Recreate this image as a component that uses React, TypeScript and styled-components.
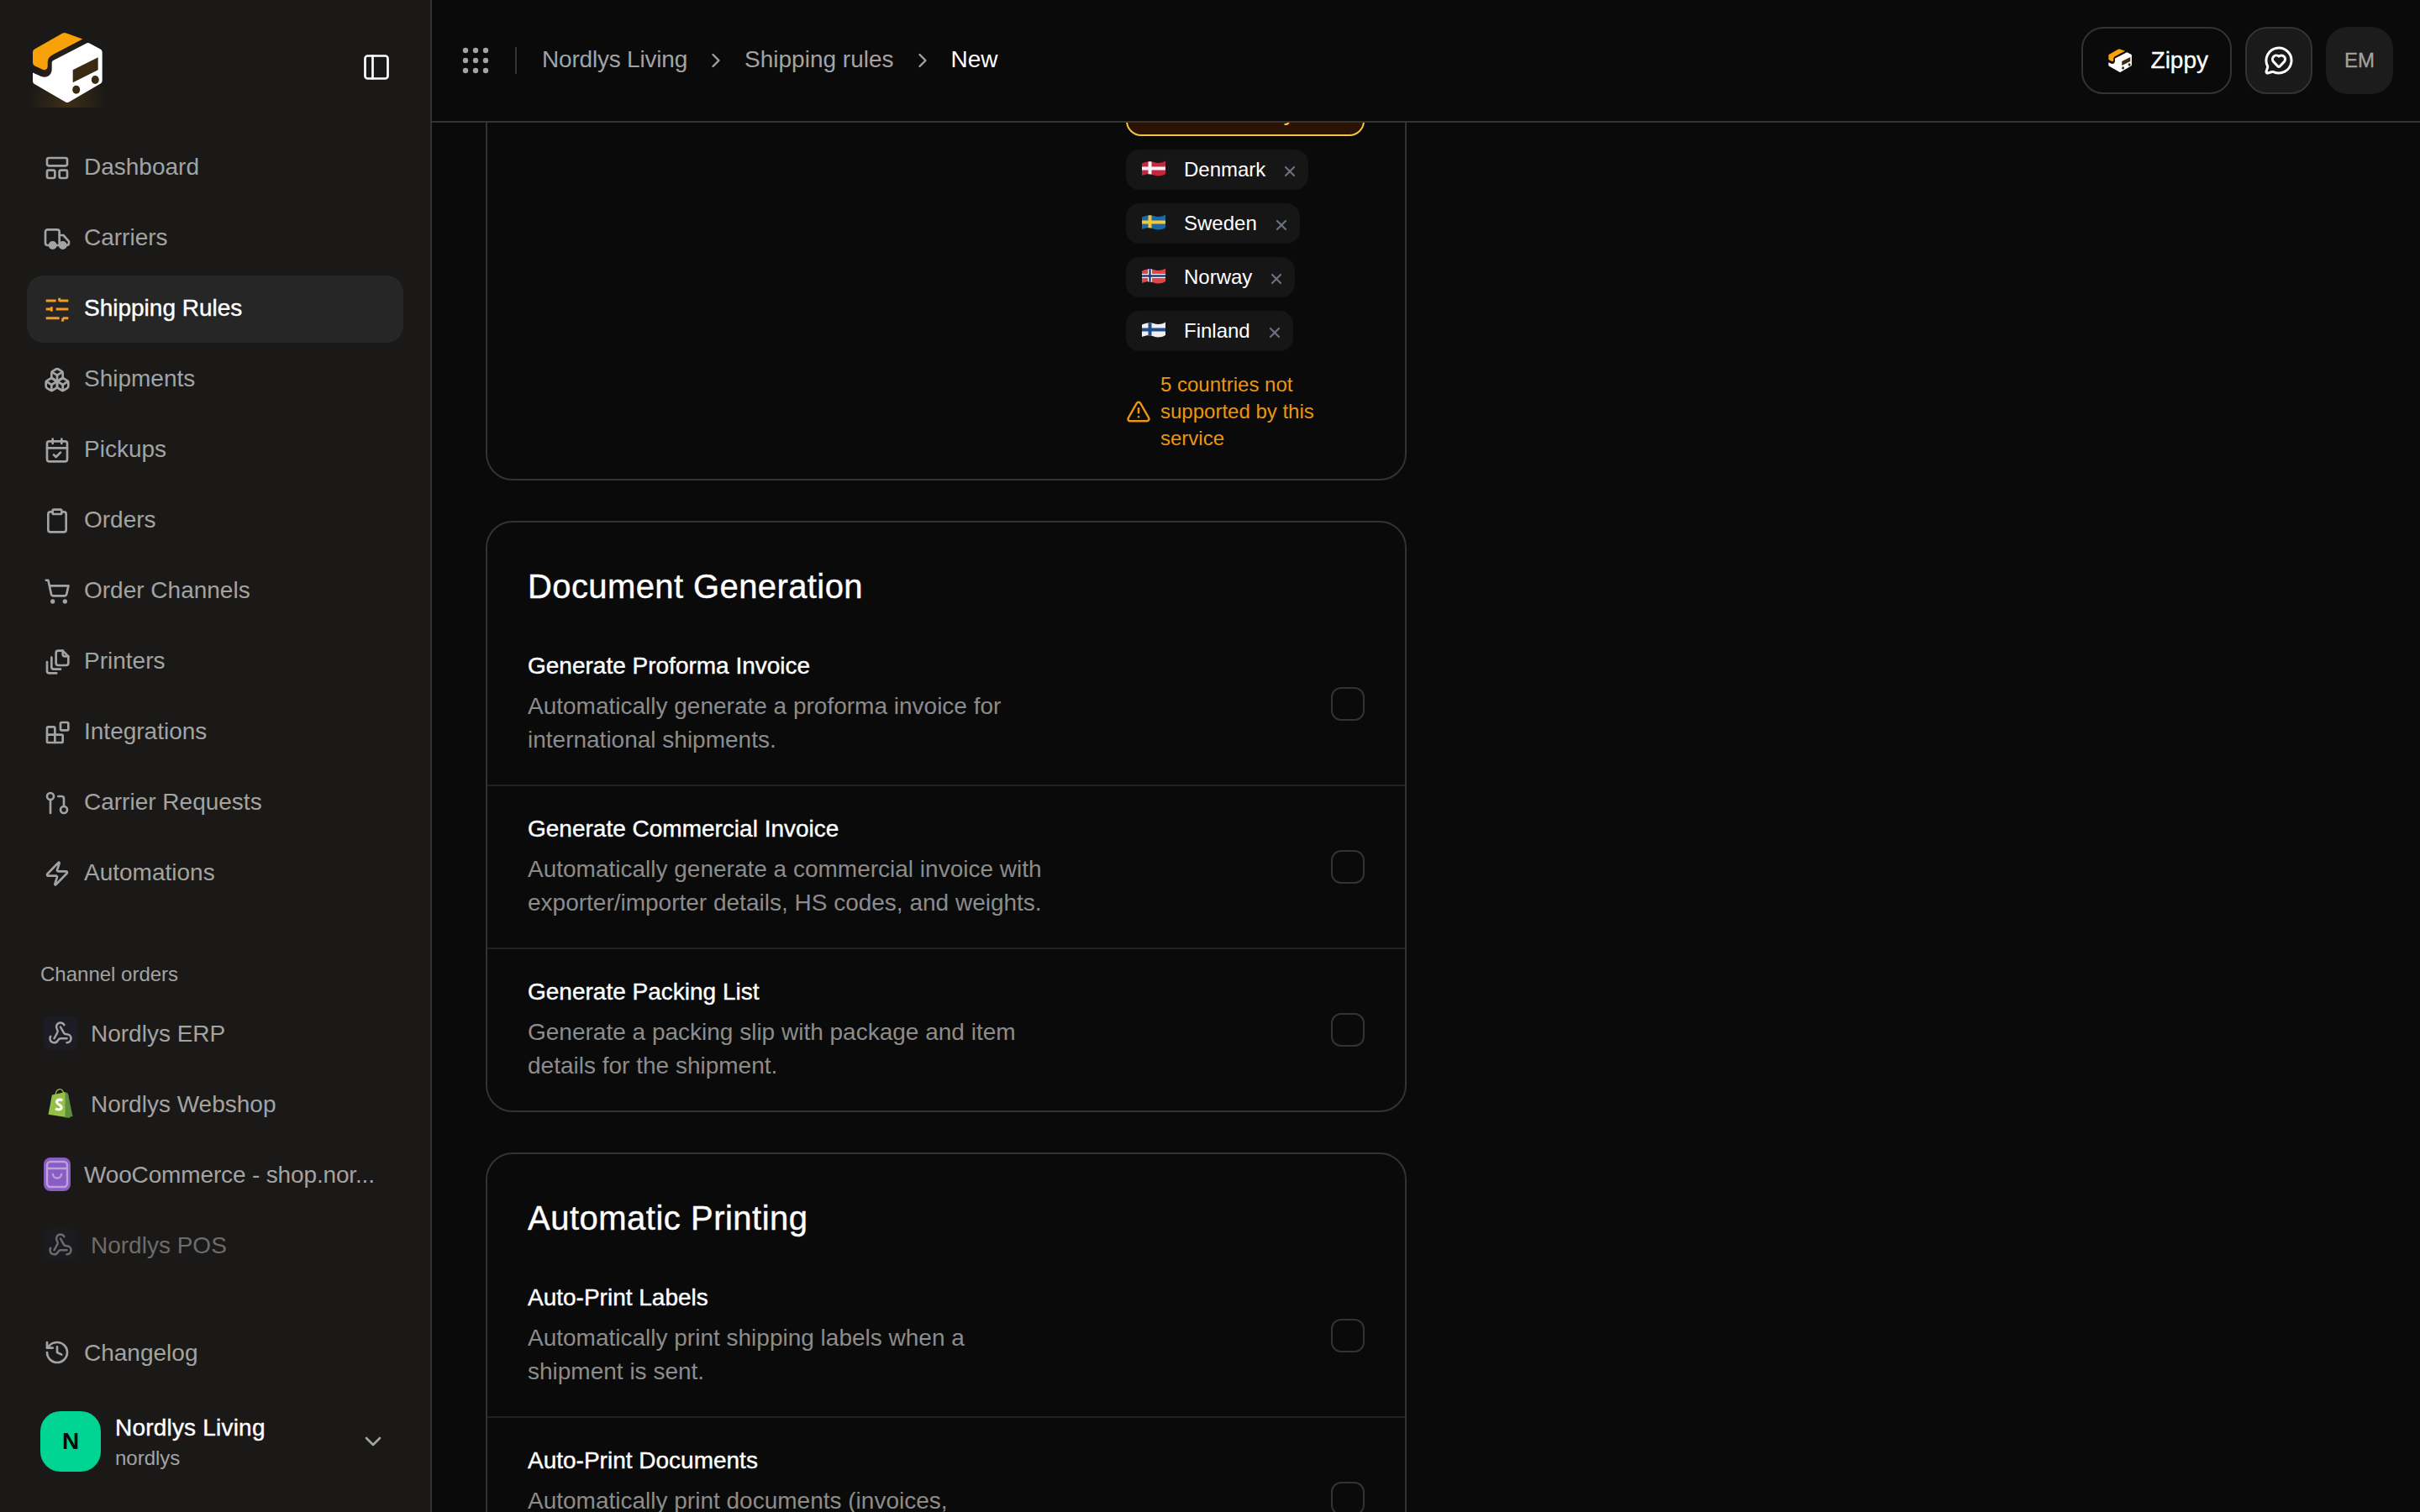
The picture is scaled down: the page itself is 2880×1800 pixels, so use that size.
import React from 'react';
import styled, { createGlobalStyle } from 'styled-components';
import {
  Boxes,
  CalendarCheck,
  ChevronDown,
  ChevronRight,
  Clipboard,
  GitPullRequest,
  History,
  MessageCircleHeart,
  PanelLeft,
  ShoppingCart,
  TriangleAlert,
  Webhook,
  X,
  Zap,
} from 'lucide-react';

const GlobalStyle = createGlobalStyle`
  html, body {
    margin: 0;
    padding: 0;
    background: #0a0a0a;
    font-family: "Liberation Sans", Arial, sans-serif;
  }
`;

const Shell = styled.div`
  display: flex;
  height: 100vh;
  overflow: hidden;
  background: #0a0a0a;
`;

const Sidebar = styled.aside`
  display: flex;
  flex-direction: column;
  flex: none;
  box-sizing: border-box;
  width: 514px;
  min-width: 0;
  height: 100%;
  padding: 32px 32px 48px;
  background: #1a1918;
  border-right: 2px solid #333;
`;

const Brand = styled.div`
  display: flex;
  align-items: center;
  justify-content: space-between;
  height: 96px;
  padding-right: 14px;
  margin-bottom: 32px;
`;

const LogoBox = styled.div`
  width: 96px;
  height: 96px;
  background: radial-gradient(ellipse at 50% 100%, rgba(245, 158, 11, 0.16), transparent 68%);
`;

const ToggleButton = styled.div`
  display: flex;
  color: #fff;
`;

const NavList = styled.nav`
  display: flex;
  flex-direction: column;
  gap: 4px;
`;

const NavItem = styled.div<{ $active?: boolean; $dim?: boolean }>`
  display: flex;
  align-items: center;
  flex: 0 0 80px;
  gap: 16px;
  box-sizing: border-box;
  height: 80px;
  padding: 0 32px 0 20px;
  border-radius: 20px;
  font-size: 28px;
  line-height: 40px;
  color: ${(p) => (p.$active ? '#fff' : '#a3a3a3')};
  background: ${(p) => (p.$active ? '#262626' : 'transparent')};
  opacity: ${(p) => (p.$dim ? 0.6 : 1)};
  -webkit-text-stroke: ${(p) => (p.$active ? '0.4px' : '0')};

  & > svg {
    flex: none;
    color: ${(p) => (p.$active ? '#f59a1c' : '#a3a3a3')};
  }
`;

const NavLabel = styled.span`
  min-width: 0;
  overflow: hidden;
  white-space: nowrap;
  text-overflow: ellipsis;
`;

const MainNavLabel = styled(NavLabel)`
  padding-bottom: 2px;
`;

const ChannelLabel = styled(NavLabel)`
  padding-top: 2px;
`;

const TruncatedLabel = styled(ChannelLabel)`
  text-overflow: clip;
  letter-spacing: -0.15px;
`;

const SectionLabel = styled.div`
  margin: 64px 0 14px 16px;
  font-size: 24px;
  line-height: 32px;
  color: #a3a3a3;
`;

const ChannelIcon = styled.div`
  display: flex;
  align-items: center;
  justify-content: center;
  flex: none;
  width: 40px;
  height: 40px;
  border-radius: 8px;
`;

const WebhookIcon = styled(ChannelIcon)`
  background: #1c1c24;
  color: #a3a3a3;
`;

const WooIcon = styled(ChannelIcon)`
  width: 32px;
  background: #8b5cc5;
`;

const Spacer = styled.div`
  flex: 1;
`;

const Account = styled.div`
  display: flex;
  align-items: center;
  gap: 17px;
  height: 72px;
  margin: 30px 0 0 16px;
  padding-right: 20px;
`;

const Avatar = styled.div`
  display: flex;
  align-items: center;
  justify-content: center;
  flex: none;
  width: 72px;
  height: 72px;
  border-radius: 24px;
  background: #00d492;
  color: #0a0a0a;
  font-size: 28px;
  font-weight: 700;
`;

const AccountText = styled.div`
  flex: 1;
  display: flex;
  flex-direction: column;
`;

const AccountName = styled.div`
  font-size: 28px;
  line-height: 40px;
  letter-spacing: 0.2px;
  color: #fff;
  -webkit-text-stroke: 0.4px;
`;

const AccountSlug = styled.div`
  font-size: 24px;
  line-height: 32px;
  color: #a3a3a3;
`;

const Main = styled.main`
  flex: 1;
  display: flex;
  flex-direction: column;
  min-width: 0;
  height: 100%;
`;

const Header = styled.header`
  position: relative;
  z-index: 1;
  display: flex;
  align-items: center;
  flex: 0 0 146px;
  box-sizing: border-box;
  padding: 0 32px 0 36px;
  background: #0a0a0a;
  border-bottom: 2px solid #333;
`;

const Divider = styled.div`
  width: 2px;
  height: 32px;
  margin: 0 30px 0 31px;
  background: #333;
`;

const Crumbs = styled.div`
  display: flex;
  align-items: center;
  gap: 20px;
  font-size: 28px;
  line-height: 40px;
  color: #a3a3a3;
`;

const Crumb = styled.span<{ $current?: boolean; $tracking?: number }>`
  padding-bottom: 2px;
  color: ${(p) => (p.$current ? '#fff' : 'inherit')};
  letter-spacing: ${(p) => p.$tracking ?? 0}px;
`;

const HeaderActions = styled.div`
  display: flex;
  align-items: center;
  gap: 16px;
  margin-left: auto;
`;

const ZippyButton = styled.div`
  display: flex;
  align-items: center;
  gap: 21px;
  box-sizing: border-box;
  height: 80px;
  padding: 0 26px 0 28px;
  border: 2px solid #333;
  border-radius: 26px;
  color: #fff;
  font-size: 28px;
  -webkit-text-stroke: 0.3px;
`;

const IconButton = styled.div`
  display: flex;
  align-items: center;
  justify-content: center;
  box-sizing: border-box;
  width: 80px;
  height: 80px;
  border: 2px solid #333;
  border-radius: 26px;
  background: #1a1a1a;
  color: #fff;
`;

const UserButton = styled(IconButton)`
  border: 0;
  background: #1c1c1c;
  color: #a3a3a3;
  font-size: 24px;
  -webkit-text-stroke: 0.3px;
`;

const ScrollArea = styled.div`
  flex: 1;
  min-height: 0;
  overflow: hidden;
`;

const Form = styled.div`
  display: flex;
  flex-direction: column;
  gap: 48px;
  width: 1096px;
  margin: -74px 0 0 64px;
`;

const Card = styled.section`
  border: 2px solid #333;
  border-radius: 32px;
`;

const CountryField = styled.div`
  display: flex;
  flex-direction: column;
  align-items: flex-start;
  gap: 16px;
  width: 284px;
  margin-left: auto;
  padding: 32px 48px 32px 0;
`;

const CountryTrigger = styled.div`
  box-sizing: border-box;
  align-self: stretch;
  height: 56px;
  padding-left: 22px;
  border: 2px solid #f5c542;
  border-radius: 18px;
  background: #2a1204;
  color: #f5c542;
  font-size: 28px;
  line-height: 52px;
`;

const Chip = styled.div`
  display: flex;
  align-items: center;
  gap: 22px;
  box-sizing: border-box;
  height: 48px;
  padding: 0 12px 0 19px;
  border-radius: 16px;
  background: #161616;
  color: #fff;
  font-size: 24px;

  & > svg:first-child {
    margin-top: -4px;
  }

  & > svg:last-child {
    margin: 4px 0 0 -3px;
    color: #6b7280;
  }
`;

const Warning = styled.div`
  display: flex;
  align-items: center;
  gap: 11px;
  margin-top: 8px;
  color: #ec960f;
  font-size: 24px;
  line-height: 32px;

  & > svg {
    flex: none;
  }
`;

const CardTitle = styled.h2<{ $tracking?: number }>`
  margin: 0 0 16px;
  padding: 48px 48px 0;
  font-size: 40px;
  font-weight: 400;
  line-height: 56px;
  letter-spacing: ${(p) => p.$tracking ?? 0}px;
  color: #fff;
  -webkit-text-stroke: 0.4px;
`;

const Row = styled.div`
  display: flex;
  align-items: center;
  justify-content: space-between;
  padding: 32px 48px;
  border-bottom: 2px solid #222;

  &:last-child {
    border-bottom: 0;
  }
`;

const RowText = styled.div`
  display: flex;
  flex-direction: column;
  gap: 8px;
  max-width: 640px;
  margin: -1px 0 1px;
`;

const RowTitle = styled.div`
  font-size: 28px;
  line-height: 40px;
  color: #fff;
  -webkit-text-stroke: 0.4px;
`;

const RowDescription = styled.div`
  font-size: 28px;
  line-height: 40px;
  color: #8c8c8c;
`;

const Checkbox = styled.div`
  flex: none;
  box-sizing: border-box;
  width: 40px;
  height: 40px;
  border: 2px solid #333;
  border-radius: 12px;
`;

const stroke = {
  fill: 'none',
  stroke: 'currentColor',
  strokeWidth: 2,
  strokeLinecap: 'round' as const,
  strokeLinejoin: 'round' as const,
};

const DashboardIcon = () => (
  <svg width="32" height="32" viewBox="0 0 24 24" {...stroke}>
    <rect x="3" y="3" width="18" height="7" rx="1.5" />
    <rect x="3" y="14" width="7" height="7" rx="1.5" />
    <rect x="14" y="14" width="7" height="7" rx="1.5" />
  </svg>
);

const TruckIcon = () => (
  <svg width="32" height="32" viewBox="0 0 24 24" {...stroke}>
    <path d="M5 18H3.500A2 2 0 0 1 1.500 16V6a2 2 0 0 1 2-2H12a2 2 0 0 1 2 2v12H11" />
    <path d="M14 9h3.500L22.500 14.500V16a2 2 0 0 1-2 2H20" />
    <circle cx="8" cy="18" r="2.800" fill="currentColor" />
    <circle cx="17" cy="18" r="2.800" fill="currentColor" />
  </svg>
);

const SlidersIcon = () => (
  <svg width="32" height="32" viewBox="0 0 24 24" {...stroke} strokeWidth={2.200} strokeLinecap="butt">
    <path d="M2 4.500h9M14 4.500h8M14 2v3" />
    <path d="M2 12h5M7 10v4M11 12h11" />
    <path d="M2 20h12M17 20h5M17 20v3" />
  </svg>
);

const PrintersIcon = () => (
  <svg width="32" height="32" viewBox="0 0 24 24" {...stroke}>
    <path d="M11 4a2 2 0 0 1 2-2h4l5 5v6a2 2 0 0 1-2 2h-7a2 2 0 0 1-2-2z" />
    <path d="M17 2v3a2 2 0 0 0 2 2h3" />
    <path d="M7 8v8.500a2 2 0 0 0 2 2h6" />
    <path d="M3 12v8a2 2 0 0 0 2 2h6.500" />
  </svg>
);

const IntegrationsIcon = () => (
  <svg width="32" height="32" viewBox="0 0 24 24" {...stroke}>
    <rect x="15" y="3" width="7" height="7" rx="1" />
    <path d="M3 8a1 1 0 0 1 1-1h5a1 1 0 0 1 1 1v6h6a1 1 0 0 1 1 1v5a1 1 0 0 1-1 1H4a1 1 0 0 1-1-1z" />
    <path d="M3 14h7v7" />
  </svg>
);

const BoxLogo = ({ size }: { size: number }) => (
  <svg width={size} height={size} viewBox="0 0 96 96">
    <path
      d="M71 19.500a4 4 0 0 1 3.500 0l13 7a4 4 0 0 1 2.200 3.500V64a4 4 0 0 1-2 3.500L50 89.500a4 4 0 0 1-4 0L9 68a4 4 0 0 1-2-3.500V54.500l10 4.500c7 2.500 12.700-1.500 12.700-9V42.500a3 3 0 0 1 1.600-2.600z"
      fill="#fff"
    />
    <path
      d="M42.500 7.500a5 5 0 0 1 4.500 0l19.300 7L31 33c-4 2-6.300 5-6.300 9v5c0 3.500-3 5-6 3.700L9.500 46.500A4.500 4.500 0 0 1 7 42.500V30a4 4 0 0 1 2.200-3.500z"
      fill="#f9a109"
    />
    <path d="M54.700 51.300l30-15v15l-30 15z" fill="#392a12" />
    <ellipse cx="58.700" cy="74.700" rx="4.500" ry="5" fill="#392a12" />
    <ellipse cx="81.300" cy="63" rx="4.500" ry="5" fill="#392a12" />
  </svg>
);

const GridDots = () => (
  <svg width="32" height="32" viewBox="0 0 32 32" fill="#a3a3a3">
    {[4, 16, 28].map((cy) =>
      [4, 16, 28].map((cx) => <circle key={`${cx}-${cy}`} cx={cx} cy={cy} r="3.200" />),
    )}
  </svg>
);

const ShopifyIcon = () => (
  <svg width="36" height="38" viewBox="0 0 32 34">
    <path d="M3 28.500L7 7.500 21 4.500 26 32z" fill="#95bf47" />
    <path d="M21 4.500l3 1.500 5 24.500-8 1.500z" fill="#5e8e3e" />
    <path d="M10.500 8C11 4 13 1.500 15.500 1.500S19 3.500 19.500 7" fill="none" stroke="#95bf47" strokeWidth="1.200" />
    <path d="M18 13.500c-2.500-1.500-6-.8-6 1.700 0 2.700 5 2.700 5 5.600 0 2.600-3.600 3-6.300 1.300" fill="none" stroke="#fff" strokeWidth="2.800" />
  </svg>
);

const WooBag = () => (
  <svg width="32" height="40" viewBox="0 0 32 40" fill="none" stroke="#b8a5d6" strokeWidth="2.400" strokeLinecap="round">
    <rect x="4" y="5" width="24" height="30" rx="4" />
    <path d="M5 13h22" />
    <path d="M11 20c0 6 10 6 10 0" />
  </svg>
);

const flagOutline = 'M0 4.500C6 2 10 1.500 14 3s9 1.500 14-1.500V17c-5 3-10 3-14 1.500S6 16.500 0 19z';

const Flag = ({ id, base, cross, inner }: { id: string; base: string; cross: string; inner?: string }) => (
  <svg width="28" height="21" viewBox="0 0 28 21">
    <clipPath id={id}>
      <path d={flagOutline} />
    </clipPath>
    <g clipPath={`url(#${id})`}>
      <rect width="28" height="21" fill={base} />
      <path d="M9.500 0v21M0 10.500h28" stroke={cross} strokeWidth={inner ? 5 : 4} />
      {inner && <path d="M9.500 0v21M0 10.500h28" stroke={inner} strokeWidth="2.400" />}
    </g>
  </svg>
);

const navItems = [
  { label: 'Dashboard', icon: <DashboardIcon /> },
  { label: 'Carriers', icon: <TruckIcon /> },
  { label: 'Shipping Rules', icon: <SlidersIcon />, active: true },
  { label: 'Shipments', icon: <Boxes size={32} /> },
  { label: 'Pickups', icon: <CalendarCheck size={32} /> },
  { label: 'Orders', icon: <Clipboard size={32} /> },
  { label: 'Order Channels', icon: <ShoppingCart size={32} /> },
  { label: 'Printers', icon: <PrintersIcon /> },
  { label: 'Integrations', icon: <IntegrationsIcon /> },
  { label: 'Carrier Requests', icon: <GitPullRequest size={32} /> },
  { label: 'Automations', icon: <Zap size={32} /> },
];

const countries = [
  { name: 'Denmark', id: 'dk', base: '#c8253f', cross: '#f4f4f4' },
  { name: 'Sweden', id: 'se', base: '#1a6aa8', cross: '#f5c731' },
  { name: 'Norway', id: 'no', base: '#e0454a', cross: '#f4f4f4', inner: '#27367d' },
  { name: 'Finland', id: 'fi', base: '#f0f0f0', cross: '#1f4a8c' },
];

const documentRows = [
  {
    title: 'Generate Proforma Invoice',
    text: 'Automatically generate a proforma invoice for international shipments.',
  },
  {
    title: 'Generate Commercial Invoice',
    text: 'Automatically generate a commercial invoice with exporter/importer details, HS codes, and weights.',
  },
  {
    title: 'Generate Packing List',
    text: 'Generate a packing slip with package and item details for the shipment.',
  },
];

const printingRows = [
  {
    title: 'Auto-Print Labels',
    text: 'Automatically print shipping labels when a shipment is sent.',
  },
  {
    title: 'Auto-Print Documents',
    text: 'Automatically print documents (invoices, commercial forms) when a shipment is sent.',
  },
];

const SettingRows = ({ rows }: { rows: { title: string; text: string }[] }) => (
  <>
    {rows.map((row) => (
      <Row key={row.title}>
        <RowText>
          <RowTitle>{row.title}</RowTitle>
          <RowDescription>{row.text}</RowDescription>
        </RowText>
        <Checkbox />
      </Row>
    ))}
  </>
);

const App: React.FC = () => (
  <Shell>
    <GlobalStyle />
    <Sidebar>
      <Brand>
        <LogoBox>
          <BoxLogo size={96} />
        </LogoBox>
        <ToggleButton>
          <PanelLeft size={36} strokeWidth={1.8} />
        </ToggleButton>
      </Brand>
      <NavList>
        {navItems.map((item) => (
          <NavItem key={item.label} $active={item.active}>
            {item.icon}
            <MainNavLabel>{item.label}</MainNavLabel>
          </NavItem>
        ))}
      </NavList>
      <SectionLabel>Channel orders</SectionLabel>
      <NavList>
        <NavItem>
          <WebhookIcon>
            <Webhook size={30} />
          </WebhookIcon>
          <ChannelLabel>Nordlys ERP</ChannelLabel>
        </NavItem>
        <NavItem>
          <ChannelIcon>
            <ShopifyIcon />
          </ChannelIcon>
          <ChannelLabel>Nordlys Webshop</ChannelLabel>
        </NavItem>
        <NavItem>
          <WooIcon>
            <WooBag />
          </WooIcon>
          <TruncatedLabel>WooCommerce - shop.nor...</TruncatedLabel>
        </NavItem>
        <NavItem $dim>
          <WebhookIcon>
            <Webhook size={30} />
          </WebhookIcon>
          <ChannelLabel>Nordlys POS</ChannelLabel>
        </NavItem>
      </NavList>
      <Spacer />
      <NavItem>
        <History size={32} />
        <ChannelLabel>Changelog</ChannelLabel>
      </NavItem>
      <Account>
        <Avatar>N</Avatar>
        <AccountText>
          <AccountName>Nordlys Living</AccountName>
          <AccountSlug>nordlys</AccountSlug>
        </AccountText>
        <ChevronDown size={32} color="#a3a3a3" />
      </Account>
    </Sidebar>
    <Main>
      <Header>
        <GridDots />
        <Divider />
        <Crumbs>
          <Crumb $tracking={-0.2}>Nordlys Living</Crumb>
          <ChevronRight size={28} />
          <Crumb>Shipping rules</Crumb>
          <ChevronRight size={28} />
          <Crumb $current>New</Crumb>
        </Crumbs>
        <HeaderActions>
          <ZippyButton>
            <BoxLogo size={32} />
            Zippy
          </ZippyButton>
          <IconButton>
            <MessageCircleHeart size={36} />
          </IconButton>
          <UserButton>EM</UserButton>
        </HeaderActions>
      </Header>
      <ScrollArea>
        <Form>
          <Card>
            <CountryField>
              <CountryTrigger>Select country</CountryTrigger>
              {countries.map((country) => (
                <Chip key={country.id}>
                  <Flag id={country.id} base={country.base} cross={country.cross} inner={country.inner} />
                  {country.name}
                  <X size={20} strokeWidth={2.6} />
                </Chip>
              ))}
              <Warning>
                <TriangleAlert size={30} />
                <span>5 countries not supported by this service</span>
              </Warning>
            </CountryField>
          </Card>
          <Card>
            <CardTitle $tracking={0.4}>Document Generation</CardTitle>
            <SettingRows rows={documentRows} />
          </Card>
          <Card>
            <CardTitle $tracking={0.5}>Automatic Printing</CardTitle>
            <SettingRows rows={printingRows} />
          </Card>
        </Form>
      </ScrollArea>
    </Main>
  </Shell>
);

export default App;
